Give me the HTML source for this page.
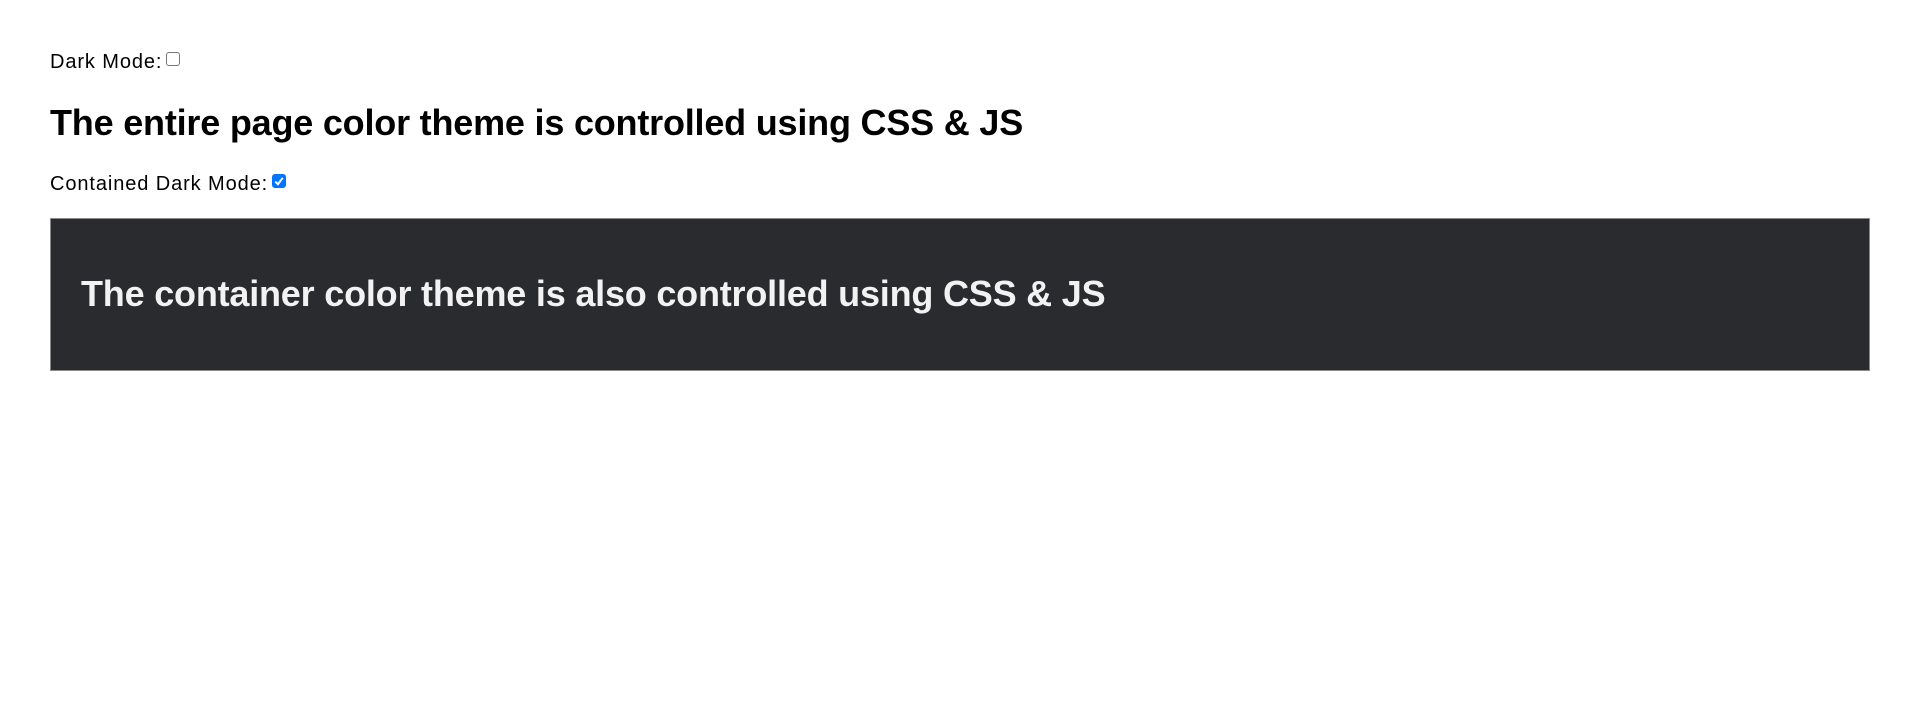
<!DOCTYPE html>
<html><head><style>
html,body{margin:0;padding:0;background:#fff;width:1918px;height:702px;overflow:hidden}
body{font-family:"Liberation Sans",sans-serif;color:#000}
.lbl{position:absolute;left:50px;font-size:20px;line-height:24px;letter-spacing:0.9px}
.cb{display:inline-block;width:14px;height:14px;border:1px solid #767676;border-radius:3px;vertical-align:2px;margin-left:4px;box-sizing:border-box;background:#fff}
.cb.on{background:#0075ff;border-color:#0075ff;position:relative}
.h{position:absolute;font-weight:bold;font-size:36px;line-height:40px;white-space:nowrap;letter-spacing:-0.2px}
.box{position:absolute;left:50px;top:218px;width:1820px;height:153px;background:#2a2b2f;border:1px solid #8a8a8a;box-sizing:border-box}
</style></head><body>
<div class="lbl" style="top:50px">Dark Mode:<span class="cb"></span></div>
<div class="h" style="left:50px;top:103px">The entire page color theme is controlled using CSS &amp; JS</div>
<div class="lbl" style="top:172px">Contained Dark Mode:<span class="cb on"><svg width="14" height="14" viewBox="0 0 13 13" style="position:absolute;left:-1px;top:-1px"><path d="M3 7 L5.5 9.5 L10 3.5" stroke="#fff" stroke-width="1.8" fill="none"/></svg></span></div>
<div class="box"></div>
<div class="h" style="left:81px;top:274px;color:#f2f2f2">The container color theme is also controlled using CSS &amp; JS</div>
</body></html>
